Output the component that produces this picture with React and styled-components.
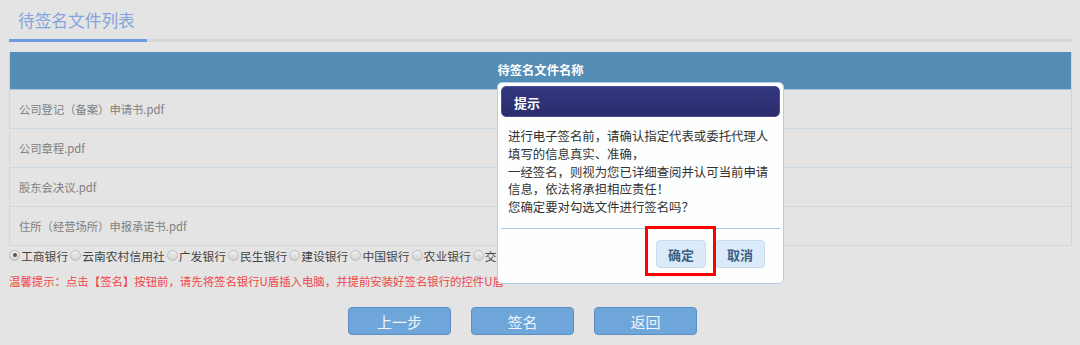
import React from "react";
import styled, { createGlobalStyle } from "styled-components";

const GlobalStyle = createGlobalStyle`
  body {
    margin: 0;
    background: #e4e4e4;
    font-family: "Noto Sans CJK SC", "Noto Sans", "Liberation Sans", sans-serif;
  }
`;

const files = [
  "公司登记（备案）申请书.pdf",
  "公司章程.pdf",
  "股东会决议.pdf",
  "住所（经营场所）申报承诺书.pdf",
];

const banks = [
  "工商银行",
  "云南农村信用社",
  "广发银行",
  "民生银行",
  "建设银行",
  "中国银行",
  "农业银行",
  "交通银行",
];

function App() {
  return (
    <Page>
      <GlobalStyle />
      <TabBar>
        <Tab>待签名文件列表</Tab>
      </TabBar>

      <Table>
        <HeadRow>待签名文件名称</HeadRow>
        {files.map((f) => (
          <Row key={f}>{f}</Row>
        ))}
      </Table>

      <BankList>
        {banks.map((b, i) => (
          <Bank key={b}>
            <Radio $checked={i === 0} />
            {b}
          </Bank>
        ))}
      </BankList>

      <Tip>温馨提示：点击【签名】按钮前，请先将签名银行U盾插入电脑，并提前安装好签名银行的控件U盾</Tip>

      <Actions>
        <ActionButton>上一步</ActionButton>
        <ActionButton>签名</ActionButton>
        <ActionButton>返回</ActionButton>
      </Actions>

      <Dialog>
        <DialogHead>提示</DialogHead>
        <DialogBody>
          进行电子签名前，请确认指定代表或委托代理人
          <br />
          填写的信息真实、准确，
          <br />
          一经签名，则视为您已详细查阅并认可当前申请
          <br />
          信息，依法将承担相应责任！
          <br />
          您确定要对勾选文件进行签名吗？
        </DialogBody>
        <DialogFoot>
          <DialogButton>确定</DialogButton>
          <DialogButton>取消</DialogButton>
        </DialogFoot>
        <Highlight />
      </Dialog>
    </Page>
  );
}

const Page = styled.div`
  position: relative;
  width: 1080px;
  height: 345px;
  padding: 0 8px 0 9px;
  box-sizing: border-box;
  overflow: hidden;
`;

const TabBar = styled.div`
  display: flex;
  height: 39px;
  border-bottom: 3px solid #d7d7d7;
`;

const Tab = styled.div`
  width: 138px;
  box-sizing: border-box;
  padding: 9px 0 0 9px;
  font-size: 16.7px;
  line-height: 22px;
  color: #84a4dc;
  border-bottom: 3px solid #6f9be0;
  margin-bottom: -3px;
  height: 42px;
`;

const Table = styled.div`
  margin-top: 10px;
  border: 1px solid #cbd8e3;
  border-top: none;
`;

const HeadRow = styled.div`
  height: 37px;
  line-height: 37px;
  background: #548db6;
  color: #ffffff;
  font-weight: bold;
  font-size: 12.3px;
  text-align: center;
  border-bottom: 1px solid #a9c3d8;
`;

const Row = styled.div`
  height: 38px;
  line-height: 38px;
  padding-left: 9px;
  font-size: 11.3px;
  color: #808080;
  border-bottom: 1px solid #cbd8e3;

  &:last-child {
    border-bottom: none;
  }
`;

const BankList = styled.div`
  display: flex;
  white-space: nowrap;
  height: 18px;
  align-items: center;
`;

const Bank = styled.span`
  display: inline-flex;
  align-items: center;
  font-size: 11.8px;
  color: #444;
  margin-right: 2px;
`;

const Radio = styled.span`
  position: relative;
  display: inline-block;
  width: 9px;
  height: 9px;
  margin-right: 1px;
  border-radius: 50%;
  border: 1px solid #bcbcbc;
  background: linear-gradient(#f0f0f0, #d2d2d2);

  &::after {
    content: "";
    display: ${(p) => (p.$checked ? "block" : "none")};
    position: absolute;
    left: 2.5px;
    top: 2.5px;
    width: 4px;
    height: 4px;
    border-radius: 50%;
    background: #555;
  }
`;

const Tip = styled.div`
  margin-top: 8px;
  font-size: 11.4px;
  line-height: 18px;
  color: #f0464a;
  white-space: nowrap;
`;

const Actions = styled.div`
  display: flex;
  gap: 20px;
  margin-top: 17px;
  padding-left: 339px;
`;

const ActionButton = styled.button`
  width: 103px;
  height: 28px;
  border: 1px solid #5d90c0;
  border-radius: 4px;
  background: #6fa6da;
  color: #eef4fa;
  font-family: inherit;
  font-size: 15px;
  padding: 0;
`;

const Dialog = styled.div`
  position: absolute;
  left: 497px;
  top: 82px;
  width: 287px;
  height: 202px;
  box-sizing: border-box;
  background: #fdfefe;
  border: 1px solid #b7cde0;
  border-radius: 5px;
  padding: 3px;
  display: flex;
  flex-direction: column;
`;

const DialogHead = styled.div`
  height: 31px;
  line-height: 31px;
  padding-left: 12px;
  border-radius: 5px;
  border: 1px solid #4c5090;
  background: linear-gradient(#33377f, #2a2c6c);
  color: #ffffff;
  font-weight: bold;
  font-size: 13px;
  box-sizing: border-box;
`;

const DialogBody = styled.div`
  padding: 11px 0 0 7px;
  height: 112px;
  box-sizing: border-box;
  font-size: 12.4px;
  line-height: 17.8px;
  color: #333;
  white-space: nowrap;
  border-bottom: 1px solid #a9c8e4;
`;

const DialogFoot = styled.div`
  display: flex;
  justify-content: flex-end;
  align-items: flex-start;
  gap: 9px;
  padding: 11px 15px 0 0;
  flex: 1;
`;

const Highlight = styled.div`
  position: absolute;
  left: 147px;
  top: 143px;
  width: 71px;
  height: 50px;
  box-sizing: border-box;
  border: 3px solid #ff0000;
  pointer-events: none;
`;

const DialogButton = styled.button`
  width: 50px;
  height: 28px;
  border: 1px solid #c6dbee;
  border-radius: 4px;
  background: #dbeaf8;
  color: #3d5f85;
  font-family: inherit;
  font-weight: bold;
  font-size: 13px;
  padding: 0;
`;

export default App;
